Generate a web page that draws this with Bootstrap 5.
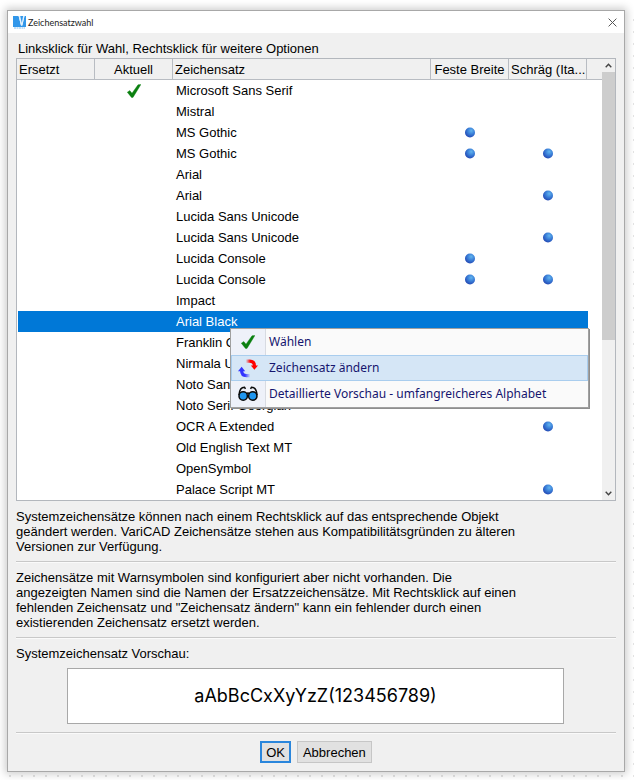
<!DOCTYPE html>
<html lang="de">
<head>
<meta charset="utf-8">
<meta name="viewport" content="width=device-width, initial-scale=1">
<title>Zeichensatzwahl</title>
<link href="https://cdn.jsdelivr.net/npm/bootstrap@5.3.0/dist/css/bootstrap.min.css" rel="stylesheet">
<style>
body{font-family:"Liberation Sans",Arial,sans-serif;font-size:13px;line-height:15px;color:#000;background:linear-gradient(#fff,#fff) 0 0/100% 10px no-repeat,radial-gradient(circle at 10px 8px,#e4e4e4 0,#e4e4e4 1px,transparent 1px) 0 0/12px 12px #fff;padding:10px 9px 8px 7px}
.dialog{border:1px solid #a8a8a8;background:#f0f0f0;box-shadow:0 0 8px 2px rgba(0,0,0,.2)}
.titlebar{background:#fff;height:22px;padding:0 7px 0 5px;font-family:Lato,sans-serif;font-size:9px;color:#222}
.titlebar svg{margin-right:2px}
.titlebar button{width:10px;height:10px;line-height:0}
.titlebar button svg{margin:0}
.dialog-content{padding:8px}
.hint{padding-left:2px;height:17px}
.list-frame{border:1px solid #b3b7bd;background:#fff}
.fonts{table-layout:fixed;border-collapse:separate;border-spacing:0}
.fonts th{height:21px;padding:0 2px;font-weight:400;background:#f0f0f0;border-right:1px solid #b8bcc2;border-bottom:1px solid #b8bcc2;white-space:nowrap}
.fonts th:last-child{border-right:0}
.fonts td{height:21px;padding:0 3px;white-space:nowrap}
.fonts td svg{display:block;margin:0 auto}
.fonts tr.chosen td{background:#0078d7;color:#fff}
.fonts tr.chosen td:first-child{border-left:1px solid #fff}
.fonts tr.chosen td:last-child{background:linear-gradient(to right,#0078d7 1px,#fff 1px)}
.w-side{width:78px}.w-end{width:15px}
.scroller{width:13px;background:#f0f0f0}
.scroller button{height:13px;width:13px;line-height:0}
.thumb{background:#cdcdcd;height:268px}
.ctx{top:269px;left:213px;right:26px;background:#fafafa;border:1px solid #a0a0a0;box-shadow:1px 1px 0 #8e8e8e;font-family:"Noto Sans",sans-serif}
.ctx button{height:26px;color:#15156e;border:1px solid transparent;font-size:12px;line-height:18px;white-space:nowrap}
.ctx button.hot{background:#d5e6f6;border-color:#a9cdee}
.ctx .ico{width:35px;height:26px;background:#eef1f9;border-right:1px solid #d8dbe2;margin:-1px 3px -1px -1px}
.ctx .hot .ico{background:none;border-color:transparent}
.note{max-width:504px}
.rule{border-top:1px solid #c8c8c8;border-bottom:1px solid #fafafa}
.preview{margin:7px 52px 8px 51px;height:56px;border:1px solid #a8a8a8;background:#fff;font-family:Inter,sans-serif;font-size:18px;line-height:24px}
.cmd{height:22px;padding:0 5px;border:1px solid #c6c6c6;background:#e1e1e1;color:#000}
.cmd.main{border:2px solid #2a86dc;padding:0 4px}
.actions{gap:6px;padding-top:7px}.stack{gap:7px}
</style>
<script src="https://cdn.jsdelivr.net/npm/bootstrap@5.3.0/dist/js/bootstrap.bundle.min.js"></script>
</head>
<body>
<svg class="position-absolute" width="0" height="0" xmlns="http://www.w3.org/2000/svg" aria-hidden="true">
<defs>
<radialGradient id="ball" cx=".62" cy=".32" r=".7"><stop offset="0" stop-color="#62b4ee"/><stop offset=".5" stop-color="#3a7fd8"/><stop offset="1" stop-color="#2349b4"/></radialGradient>
<linearGradient id="red"><stop offset="0" stop-color="#f00" stop-opacity=".05"/><stop offset=".5" stop-color="#f00"/></linearGradient>
<linearGradient id="blue"><stop offset=".4" stop-color="#33f"/><stop offset="1" stop-color="#33f" stop-opacity=".05"/></linearGradient>
</defs>
<symbol id="dot" viewBox="0 0 12 12"><circle cx="6" cy="5.5" r="5" fill="url(#ball)"/></symbol>
<symbol id="tick" viewBox="0 0 14 14"><path d="M.3 8.2 2.8 6.6 5 9.2 11 .8 13.9.5 6 13.4H4.5Z" fill="#0b8010" stroke="#0b8010" stroke-width=".4"/></symbol>
</svg>
<main class="dialog">
<header class="titlebar d-flex align-items-center">
<svg width="13" height="13" viewBox="0 0 13 13" aria-hidden="true"><path d="M0 0H5.6L8 9.5H9.2L11.5 0H13V11H0Z" fill="#3197ea"/><path d="M5.6 0H7.2L8.8 7 10.1 0H11.5L9.4 9.5H8Z" fill="#e3f1fc"/><path d="M7.2 0H10.1L8.8 7Z" fill="#3197ea"/><path d="M1 12H12" stroke="#83bff0" stroke-dasharray="2 .5"/></svg>
<span>Zeichensatzwahl</span>
<button type="button" class="ms-auto p-0 border-0 bg-transparent" aria-label="Schließen"><svg width="9" height="9" viewBox="0 0 9 9"><path d="M.6.6 8.4 8.4M8.4.6.6 8.4" stroke="#555" fill="none"/></svg></button>
</header>
<div class="dialog-content">
<div class="hint">Linksklick für Wahl, Rechtsklick für weitere Optionen</div>
<div class="list-frame d-flex position-relative">
<table class="fonts w-100">
<colgroup><col class="w-side"><col class="w-side"><col><col class="w-side"><col class="w-side"><col class="w-end"></colgroup>
<thead><tr><th>Ersetzt</th><th class="text-center">Aktuell</th><th>Zeichensatz</th><th class="text-center">Feste Breite</th><th>Schräg (Ita...</th><th></th></tr></thead>
<tbody>
<tr><td></td><td><svg width="14" height="14"><use href="#tick"/></svg></td><td>Microsoft Sans Serif</td><td></td><td></td><td></td></tr>
<tr><td></td><td></td><td>Mistral</td><td></td><td></td><td></td></tr>
<tr><td></td><td></td><td>MS Gothic</td><td><svg width="12" height="12"><use href="#dot"/></svg></td><td></td><td></td></tr>
<tr><td></td><td></td><td>MS Gothic</td><td><svg width="12" height="12"><use href="#dot"/></svg></td><td><svg width="12" height="12"><use href="#dot"/></svg></td><td></td></tr>
<tr><td></td><td></td><td>Arial</td><td></td><td></td><td></td></tr>
<tr><td></td><td></td><td>Arial</td><td></td><td><svg width="12" height="12"><use href="#dot"/></svg></td><td></td></tr>
<tr><td></td><td></td><td>Lucida Sans Unicode</td><td></td><td></td><td></td></tr>
<tr><td></td><td></td><td>Lucida Sans Unicode</td><td></td><td><svg width="12" height="12"><use href="#dot"/></svg></td><td></td></tr>
<tr><td></td><td></td><td>Lucida Console</td><td><svg width="12" height="12"><use href="#dot"/></svg></td><td></td><td></td></tr>
<tr><td></td><td></td><td>Lucida Console</td><td><svg width="12" height="12"><use href="#dot"/></svg></td><td><svg width="12" height="12"><use href="#dot"/></svg></td><td></td></tr>
<tr><td></td><td></td><td>Impact</td><td></td><td></td><td></td></tr>
<tr class="chosen"><td></td><td></td><td>Arial Black</td><td></td><td></td><td></td></tr>
<tr><td></td><td></td><td>Franklin Gothic</td><td></td><td></td><td></td></tr>
<tr><td></td><td></td><td>Nirmala UI</td><td></td><td></td><td></td></tr>
<tr><td></td><td></td><td>Noto Sans</td><td></td><td></td><td></td></tr>
<tr><td></td><td></td><td>Noto Serif Georgian</td><td></td><td></td><td></td></tr>
<tr><td></td><td></td><td>OCR A Extended</td><td></td><td><svg width="12" height="12"><use href="#dot"/></svg></td><td></td></tr>
<tr><td></td><td></td><td>Old English Text MT</td><td></td><td></td><td></td></tr>
<tr><td></td><td></td><td>OpenSymbol</td><td></td><td></td><td></td></tr>
<tr><td></td><td></td><td>Palace Script MT</td><td></td><td><svg width="12" height="12"><use href="#dot"/></svg></td><td></td></tr>
</tbody>
</table>
<div class="scroller d-flex flex-column flex-shrink-0">
<button type="button" class="p-0 border-0 bg-transparent" aria-label="Nach oben"><svg width="7" height="5" viewBox="0 0 7 5"><path d="M.7 4.2 3.5 1.2 6.3 4.2" fill="none" stroke="#444" stroke-width="1.4"/></svg></button>
<div class="thumb"></div>
<button type="button" class="mt-auto p-0 border-0 bg-transparent" aria-label="Nach unten"><svg width="7" height="5" viewBox="0 0 7 5"><path d="M.7.8 3.5 3.8 6.3.8" fill="none" stroke="#444" stroke-width="1.4"/></svg></button>
</div>
<div class="ctx position-absolute d-flex flex-column" role="menu">
<button type="button" role="menuitem" class="d-flex align-items-center p-0 bg-transparent"><span class="ico d-flex align-items-center justify-content-center"><svg width="14" height="14"><use href="#tick"/></svg></span>Wählen</button>
<button type="button" role="menuitem" class="hot d-flex align-items-center p-0"><span class="ico d-flex align-items-center justify-content-center"><svg width="20" height="19" viewBox="0 0 20 19"><path d="M8 2.2H11.5C15 2.2 16.4 4 16.4 7" fill="none" stroke="url(#red)" stroke-width="3.2"/><path d="M12.8 6.5H20L16.4 10.8Z" fill="red"/><path d="M3.6 11.5C3.6 15 5.2 16.6 8.5 16.6H12" fill="none" stroke="url(#blue)" stroke-width="3.2"/><path d="M0 12.2H7.2L3.6 7.8Z" fill="#33f"/></svg></span>Zeichensatz ändern</button>
<button type="button" role="menuitem" class="d-flex align-items-center p-0 bg-transparent"><span class="ico d-flex align-items-center justify-content-center"><svg width="20" height="16" viewBox="0 0 20 16"><g fill="none" stroke="#0a0a0a" stroke-width="1.5"><path d="M1 9C1.3 5 3.2 1.3 6.5 1.3L7.5 2.8M19 9C18.7 5 16.8 1.3 13.5 1.3L12.5 2.8M8.3 7.6Q10 6.3 11.7 7.6"/><circle cx="5.2" cy="10" r="4.2" fill="#1e96f0"/><circle cx="14.8" cy="10" r="4.2" fill="#1e96f0"/></g></svg></span>Detaillierte Vorschau - umfangreicheres Alphabet</button>
</div>
</div>
<div class="stack d-flex flex-column pt-2">
<p class="note m-0">Systemzeichensätze können nach einem Rechtsklick auf das entsprechende Objekt geändert werden. VariCAD Zeichensätze stehen aus Kompatibilitätsgründen zu älteren Versionen zur Verfügung.</p>
<div class="rule"></div>
<p class="note m-0">Zeichensätze mit Warnsymbolen sind konfiguriert aber nicht vorhanden. Die angezeigten Namen sind die Namen der Ersatzzeichensätze. Mit Rechtsklick auf einen fehlenden Zeichensatz und "Zeichensatz ändern" kann ein fehlender durch einen existierenden Zeichensatz ersetzt werden.</p>
<div class="rule"></div>
<div>Systemzeichensatz Vorschau:</div>
</div>
<div class="preview d-flex align-items-center justify-content-center">aAbBcCxXyYzZ(123456789)</div>
<div class="rule"></div>
<div class="actions d-flex justify-content-center">
<button type="button" class="cmd main">OK</button>
<button type="button" class="cmd">Abbrechen</button>
</div>
</div>
</main>
</body>
</html>
